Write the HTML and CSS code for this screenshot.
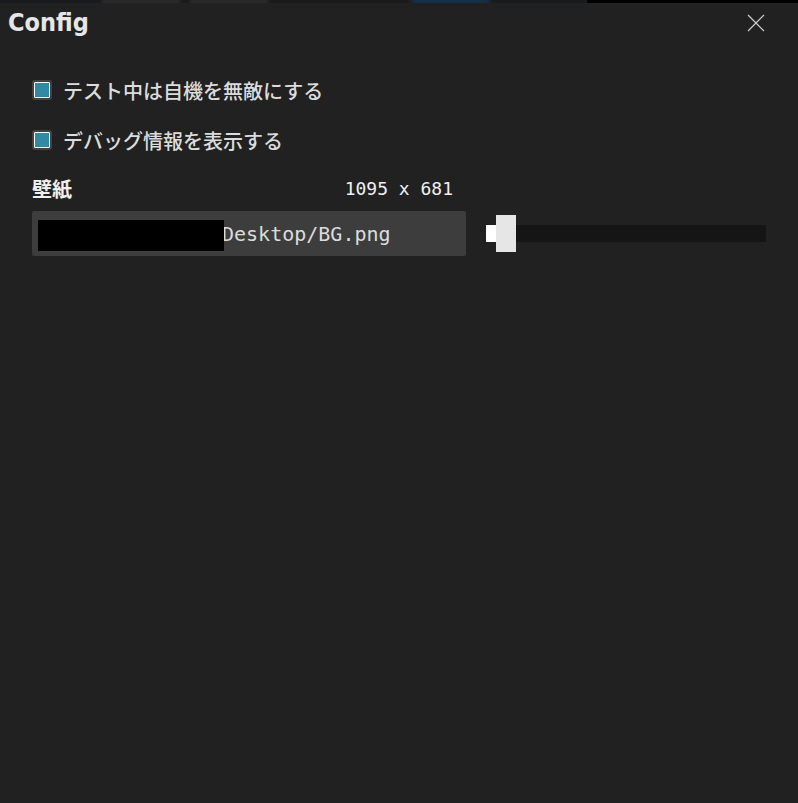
FILE: index.html
```html
<!DOCTYPE html>
<html lang="ja">
<head>
    <meta charset="UTF-8">
    <meta name="viewport" content="width=device-width, initial-scale=1">
    <title>Config</title>
    <link rel="stylesheet" href="styles.css">
</head>
<body>
    <div class="backdrop"></div>
    <header class="titlebar">
        <h1 class="title">Config</h1>
        <button type="button" class="close" aria-label="Close">
            <svg width="18" height="18" viewBox="0 0 18 18" aria-hidden="true">
                <path d="M1 1L17 17M17 1L1 17" stroke="currentColor" stroke-width="1.2" fill="none"/>
            </svg>
        </button>
    </header>

    <main class="settings">
        <label class="option">
            <input type="checkbox" class="check" checked>
            テスト中は自機を無敵にする
        </label>
        <label class="option">
            <input type="checkbox" class="check" checked>
            デバッグ情報を表示する
        </label>

        <div class="wallpaper">
            <div class="wallpaper-head">
                <label for="wallpaperPath">壁紙</label>
                <output class="size">1095 x 681</output>
            </div>
            <div class="path">
                <input type="text" class="path-input" id="wallpaperPath" value="Desktop/BG.png" spellcheck="false">
                <span class="mask"></span>
            </div>
            <input type="range" class="slider" min="0" max="26" value="1" aria-label="壁紙">
        </div>
    </main>
</body>
</html>
```

FILE: styles.css
```css
* {
    box-sizing: border-box;
}

body {
    margin: 0;
    min-height: 100vh;
    background: #212121;
    color: #dcdcdc;
    font-family: "Noto Sans CJK JP", sans-serif;
    font-size: 20px;
}

/* edge of the editor behind the panel */
.backdrop {
    height: 3px;
    background: linear-gradient(to right,
        #1a1b1f 100px, #29292a 104px, #29292a 178px, #1a1b1d 182px,
        #1a1b1d 188px, #29292a 192px, #29292a 266px, #1b1b1c 270px,
        #1b1b1c 408px, #17304a 416px, #17304a 486px, #1a1b1d 492px,
        #1a1b1d 587px, #000 587px);
}

.titlebar {
    display: flex;
    justify-content: space-between;
    align-items: center;
    height: 39px;
    padding: 0 32px 0 8px;
}

.title {
    margin: 0;
    color: #e6e6e6;
    font-family: "DejaVu Sans Condensed", "DejaVu Sans", sans-serif;
    font-size: 25px;
    font-weight: bold;
}

.close {
    display: flex;
    padding: 1px;
    border: none;
    background: none;
    color: #d0d0d0;
    cursor: pointer;
}

.settings {
    padding: 32px;
}

.option {
    display: flex;
    align-items: center;
    gap: 11px;
    height: 32px;
    margin-bottom: 18px;
    font-weight: 500;
}

.check {
    appearance: none;
    flex: none;
    width: 20px;
    height: 20px;
    margin: 0;
    border: 2px solid #424242;
    border-radius: 3px;
}

.check:checked {
    background: #2e8ba3;
    box-shadow: inset 0 0 0 1px #fff;
}

.wallpaper {
    display: grid;
    grid-template-columns: 31fr 20fr;
    column-gap: 20px;
    align-items: center;
}

.wallpaper-head {
    grid-column: 1;
    display: flex;
    justify-content: space-between;
    align-items: center;
    height: 28px;
    margin-bottom: 9px;
    padding-right: 13px;
    color: #f0f0f0;
    font-weight: bold;
}

.size {
    font-family: "DejaVu Sans Mono", monospace;
    font-size: 18px;
    font-weight: normal;
}

.path {
    position: relative;
    grid-column: 1;
}

.path-input {
    display: block;
    width: 100%;
    height: 45px;
    padding: 0 6px 0 190px;
    border: none;
    border-radius: 2px;
    background: #3d3d3d;
    color: #dcdcdc;
    font-family: "DejaVu Sans Mono", monospace;
    font-size: 20px;
}

.mask {
    position: absolute;
    top: 9px;
    left: 6px;
    width: 186px;
    height: 31px;
    background: #000;
}

.slider {
    appearance: none;
    width: 100%;
    height: 37px;
    margin: 0;
    background: none;
}

.slider::-webkit-slider-runnable-track {
    height: 17px;
    background: linear-gradient(to right, #fff 12px, #151515 12px);
}

.slider::-webkit-slider-thumb {
    appearance: none;
    width: 20px;
    height: 37px;
    margin-top: -10px;
    background: #e6e6e6;
}
```
